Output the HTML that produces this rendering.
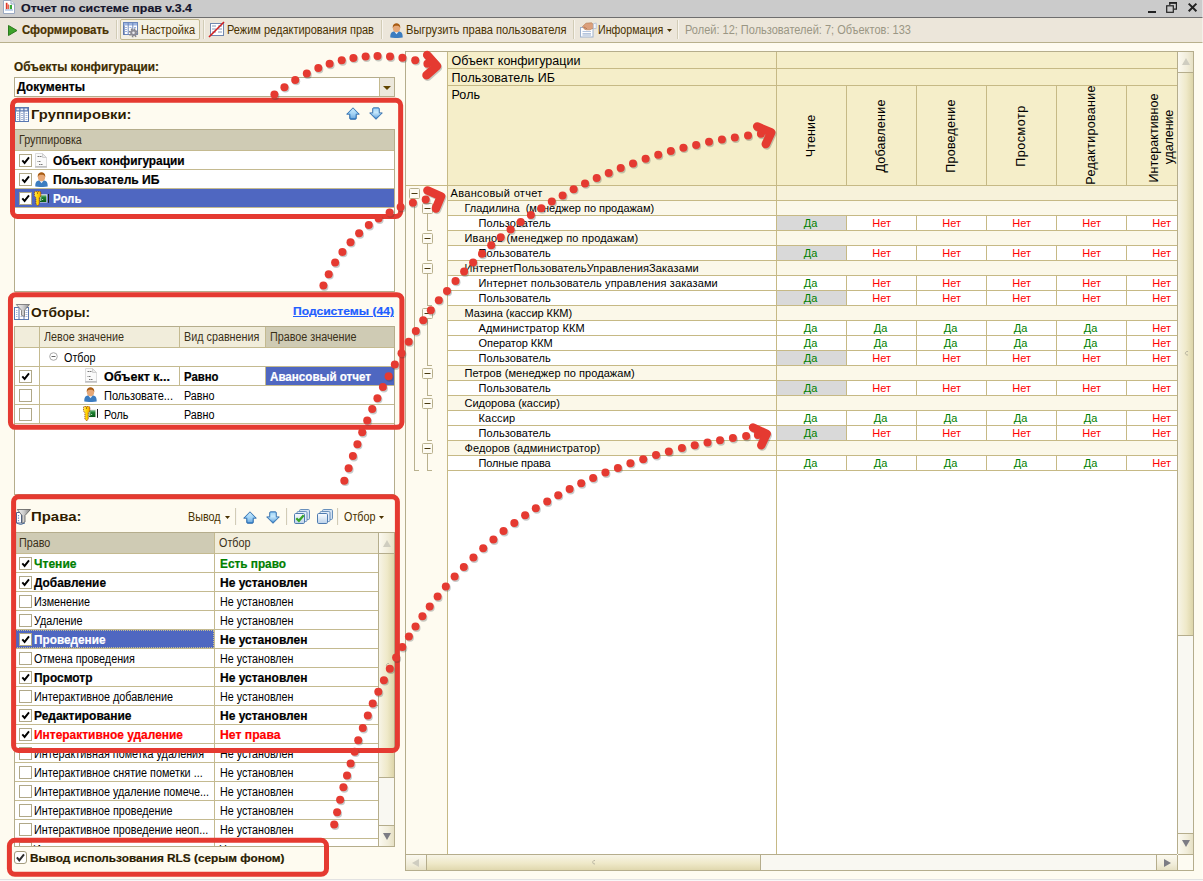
<!DOCTYPE html><html lang="ru"><head><meta charset="utf-8"><title>Отчет по системе прав v.3.4</title><style>
html,body{margin:0;padding:0}
body{width:1203px;height:881px;position:relative;overflow:hidden;background:#fefbf0;font-family:"Liberation Sans",sans-serif;font-size:11px;color:#000}
div,span{box-sizing:border-box}
.abs{position:absolute}
.t{position:absolute;white-space:pre;line-height:1}
#title{position:absolute;left:0;top:0;width:1203px;height:18px;background:#cbcbcb;border-bottom:1px solid #6e6e6e}
#tb{position:absolute;left:0;top:18px;width:1203px;height:25px;background:#ece6da;border-bottom:1px solid #b8b08c}
.tbt{position:absolute;white-space:nowrap;line-height:1;color:#4a3200;font-size:11px}
.sep{position:absolute;width:2px;height:19px;border-left:1px solid #d2ccb6;border-right:1px solid #f8f5ee}
.cb{position:absolute;width:13px;height:13px;border:1px solid #b0a888;background:#fff}
.hl{position:absolute;height:1px;background:#c4ba90}
.vl{position:absolute;width:1px;background:#c4ba90}
</style></head><body>
<div id="title">
<svg class="abs" style="left:3px;top:0" width="12" height="14" viewBox="0 0 12 14"><path d="M0.500 0.500h7.500l3.500 3.500v9.500h-11z" fill="#fff" stroke="#9aa8c0"/><path d="M8 0.500v3.500h3.500" fill="#e8ecf4" stroke="#9aa8c0"/><rect x="2.800" y="2.800" width="1.700" height="6.400" fill="#e03828"/><rect x="4.600" y="4.500" width="1.500" height="4.700" fill="#e86050"/><rect x="6.800" y="5" width="2.200" height="4.200" fill="#38a838"/><path d="M2 10h8" stroke="#8cb0e0"/></svg>
<span class="t" style="left:21px;top:3px;font-size:11.5px;font-weight:bold;-webkit-text-stroke:0.2px;color:#14142c;transform:scaleX(1.0776);transform-origin:0 0">Отчет по системе прав v.3.4</span>
<svg class="abs" style="left:1140px;top:0" width="63" height="17" viewBox="0 0 63 17"><rect x="8" y="11" width="8" height="2" fill="#222"/><path d="M29.800 5v-2.300h6.600v6.500h-2.400" fill="none" stroke="#222" stroke-width="1.200"/><rect x="29.200" y="2.200" width="7.800" height="1.600" fill="#222"/><rect x="26.700" y="5.800" width="6.600" height="6.500" fill="none" stroke="#222" stroke-width="1.200"/><path d="M48.700 3.600l7.700 7.700M56.400 3.600l-7.700 7.700" stroke="#222" stroke-width="2"/></svg>
</div>
<div id="tb">
<svg class="abs" style="left:8px;top:7px" width="10" height="11" viewBox="0 0 10 11"><path d="M0.500 0.500L9 5.500L0.500 10.500z" fill="#3da32a" stroke="#2c7a1e"/></svg>
<span class="tbt" style="left:22px;top:6.15px;font-size:12px;font-weight:bold;-webkit-text-stroke:0.2px;transform:scaleX(0.9517);transform-origin:0 0">Сформировать</span>
<div class="sep" style="left:116px;top:2px"></div>
<div class="abs" style="left:120px;top:1px;width:80px;height:21px;border:1px solid #c2b98f;background:#f4f1e4;border-radius:2px"></div>
<svg class="abs" style="left:123px;top:4px" width="16" height="16" viewBox="0 0 16 16"><rect x="0.500" y="0.500" width="14" height="12" fill="#fff" stroke="#6c88bc"/><rect x="1" y="1" width="13" height="2.500" fill="#9cb4e0"/><path d="M5.200 1v11M9.800 1v11" stroke="#6c88bc"/><path d="M2 5.500h2M2 7.500h2M2 9.500h2M6.500 5.500h2M11 5.500h2" stroke="#9cb4e0"/><rect x="0.500" y="3.500" width="1.500" height="9" fill="#3c5890" opacity=".55"/><circle cx="10.500" cy="10.800" r="3.700" fill="none" stroke="#84848c" stroke-width="2" stroke-dasharray="1.450 1.450"/><circle cx="10.500" cy="10.800" r="3.300" fill="#8c8c94"/><circle cx="10.500" cy="10.800" r="1.300" fill="#ececf0"/></svg>
<span class="tbt" style="left:141px;top:6.15px;font-size:12px;transform:scaleX(0.9167);transform-origin:0 0">Настройка</span>
<div class="sep" style="left:203px;top:2px"></div>
<svg class="abs" style="left:208px;top:3px" width="18" height="17" viewBox="0 0 18 17"><rect x="2.500" y="2.500" width="13" height="12" fill="#fff" stroke="#7088b0"/><path d="M4 5h4M4 8h4M4 11h4M10 5h4M10 8h4M10 11h4" stroke="#8898b8"/><path d="M1 16L16 1" stroke="#d02020" stroke-width="1.600"/></svg>
<span class="tbt" style="left:227px;top:6.15px;font-size:12px;transform:scaleX(0.9167);transform-origin:0 0">Режим редактирования прав</span>
<div class="sep" style="left:381px;top:2px"></div>
<svg class="abs" style="left:389.500px;top:5px" width="13" height="15" viewBox="0 0 13 15"><path d="M0.300 14.500c0-4.800 1.200-6.300 6.200-6.300s6.200 1.500 6.200 6.300c-3 .7-9.400.7-12.400 0z" fill="#3b7cc0"/><path d="M4.300 8.600l2.200 2.600l2.200-2.600z" fill="#e8eef6"/><ellipse cx="6.500" cy="5.200" rx="3.600" ry="4" fill="#e6a878"/><path d="M2.700 5c-.6-6.200 8.200-6.200 7.600 0c-.8-1.700-1.600-2.200-3.800-2.200s-3 .5-3.800 2.200z" fill="#a85c14"/></svg>
<span class="tbt" style="left:406px;top:6.15px;font-size:12px;transform:scaleX(0.9282);transform-origin:0 0">Выгрузить права пользователя</span>
<div class="sep" style="left:573px;top:2px"></div>
<svg class="abs" style="left:580px;top:4px" width="17" height="16" viewBox="0 0 17 16"><rect x="0.500" y="5.500" width="12.500" height="9.500" fill="#fdfdff" stroke="#9cb0cc"/><path d="M2.500 9.500h8.500M2.500 11.500h8.500" stroke="#b4c4dc"/><path d="M2.500 13h8.500" stroke="#9cb0cc"/><path d="M2.500 4.500L6 1.200L11.500 0.800L13.500 2.500V6L10 7.800H6.500L4.500 7.200z" fill="#dca07c" stroke="#b07850" stroke-width=".6"/><path d="M13.300 1.800L16.200 1v5.500L13.300 6.500z" fill="#f4f6fa" stroke="#9cb0cc" stroke-width=".6"/><path d="M4 5l3 1.800" stroke="#a86c48" stroke-width=".7"/></svg>
<span class="tbt" style="left:598px;top:6.15px;font-size:12px;transform:scaleX(0.8888);transform-origin:0 0">Информация</span>
<svg class="abs" style="left:667px;top:11px" width="5" height="3" viewBox="0 0 5 3"><path d="M0 0h5L2.500 3z" fill="#4a3200"/></svg>
<div class="sep" style="left:677px;top:2px"></div>
<span class="tbt" style="left:685px;top:6.15px;font-size:12px;color:#9a9684;transform:scaleX(0.9167);transform-origin:0 0">Ролей: 12; Пользователей: 7; Объектов: 133</span>
</div>
<span class="t" style="left:14px;top:61.15px;font-size:12px;font-weight:bold;-webkit-text-stroke:0.2px;color:#3c2c00;transform:scaleX(0.9836);transform-origin:0 0">Объекты конфигурации:</span>
<div class="abs" style="left:14px;top:77px;width:381px;height:20px;border:1px solid #b5ad8c;background:#fff"></div>
<span class="t" style="left:17px;top:81.15px;font-size:12px;font-weight:bold;-webkit-text-stroke:0.2px;transform:scaleX(1.0078);transform-origin:0 0">Документы</span>
<div class="abs" style="left:379px;top:78px;width:15px;height:18px;background:#ece8dc;border-left:1px solid #c4ba90"></div>
<svg class="abs" style="left:383px;top:86px" width="8" height="4" viewBox="0 0 8 4"><path d="M0 0h8L4.0 4z" fill="#624600"/></svg>
<svg class="abs" style="left:15px;top:107px" width="14" height="15" viewBox="0 0 14 15"><rect x="0.500" y="0.500" width="13" height="14" fill="#fff" stroke="#5a78b0"/><rect x="1" y="1" width="12" height="3.500" fill="#5a78b0"/><rect x="1.500" y="1.500" width="2.800" height="1.800" fill="#e8eef8"/><rect x="5.500" y="1.500" width="2.800" height="1.800" fill="#e8eef8"/><rect x="9.500" y="1.500" width="2.800" height="1.800" fill="#e8eef8"/><path d="M4.800 4v10M9 4v10" stroke="#5a78b0"/><path d="M2 6.500h1.500M2 8.500h1.500M2 10.500h1.500M2 12.500h1.500M6 6.500h2M6 8.500h2M6 10.500h2M6 12.500h2M10.500 6.500h2M10.500 8.500h2M10.500 10.500h2M10.500 12.500h2" stroke="#a8b8d8"/></svg>
<span class="t" style="left:30.5px;top:107.5px;font-size:13.4px;font-weight:bold;color:#2e1c00;transform:scaleX(1.1045);transform-origin:0 0">Группировки:</span>
<svg class="abs" style="left:346.2px;top:107px" width="14" height="13" viewBox="0 0 14 13"><defs><linearGradient id="gu1" x1="0" y1="0" x2="0" y2="1"><stop offset="0" stop-color="#c4eafd"/><stop offset=".55" stop-color="#7cc0f0"/><stop offset="1" stop-color="#2f7fca"/></linearGradient></defs><path d="M7 0.800L13.300 7.200H10.300V11.300Q10.300 12.300 9.300 12.300H4.700Q3.700 12.300 3.700 11.300V7.200H0.700z" fill="url(#gu1)" stroke="#2c68a8" stroke-width=".9" stroke-linejoin="round"/><path d="M7 2.600L10.800 6.400H9.300V11H4.700V6.400H3.200z" fill="#fff" opacity=".28"/></svg>
<svg class="abs" style="left:369.4px;top:107.3px" width="14" height="13" viewBox="0 0 14 13"><defs><linearGradient id="gu2" x1="0" y1="0" x2="0" y2="1"><stop offset="0" stop-color="#7cc0f0"/><stop offset=".4" stop-color="#b4e2fc"/><stop offset="1" stop-color="#2f7fca"/></linearGradient></defs><path d="M7 12.300L13.300 5.900H10.300V1.800Q10.300 0.800 9.300 0.800H4.700Q3.700 0.800 3.700 1.800V5.900H0.700z" fill="url(#gu2)" stroke="#2c68a8" stroke-width=".9" stroke-linejoin="round"/><path d="M7 10.500L10.800 6.700H9.300V2.100H4.700V6.700H3.200z" fill="#fff" opacity=".25"/></svg>
<div class="abs" style="left:14px;top:129px;width:381px;height:163px;border:1px solid #b5ad8c;background:#fff"></div>
<div class="abs" style="left:15px;top:130px;width:379px;height:20px;background:#cfcbb4"></div>
<span class="t" style="left:19px;top:134.15px;font-size:12px;color:#3a3018;transform:scaleX(0.8983);transform-origin:0 0">Группировка</span>
<div class="hl" style="left:15px;top:150px;width:379px"></div>
<div class="hl" style="left:15px;top:169px;width:379px"></div>
<div class="cb" style="left:19px;top:154px"><svg width="11" height="11" viewBox="0 0 11 11" style="display:block"><path d="M2.300 5.300L4.600 7.900L9 2.400" fill="none" stroke="#000" stroke-width="1.900"/></svg></div>
<svg class="abs" style="left:35px;top:153px" width="12" height="15" viewBox="0 0 12 15"><path d="M0.500 0.500h7l4 4v9h-11z" fill="#fafafa" stroke="#dcdcdc"/><path d="M7.500 0.500v4h4z" fill="#ececec" stroke="#d0d0d0"/><path d="M2.500 3.500h2M5 3.500h1.500M2.500 8.500h1M4 8.500h1.500M4 11.500h1M5.500 11.500h2" stroke="#7a7a7a"/><path d="M0 14h12" stroke="#a4a4a4"/></svg>
<span class="t" style="left:53px;top:155.15px;font-size:12px;font-weight:bold;-webkit-text-stroke:0.2px;transform:scaleX(0.9874);transform-origin:0 0">Объект конфигурации</span>
<div class="hl" style="left:15px;top:188px;width:379px"></div>
<div class="cb" style="left:19px;top:173px"><svg width="11" height="11" viewBox="0 0 11 11" style="display:block"><path d="M2.300 5.300L4.600 7.900L9 2.400" fill="none" stroke="#000" stroke-width="1.900"/></svg></div>
<svg class="abs" style="left:35px;top:172px" width="13" height="15" viewBox="0 0 13 15"><path d="M0.300 14.500c0-4.800 1.200-6.300 6.200-6.300s6.200 1.500 6.200 6.300c-3 .7-9.400.7-12.400 0z" fill="#3b7cc0"/><path d="M4.300 8.600l2.200 2.600l2.200-2.600z" fill="#e8eef6"/><ellipse cx="6.500" cy="5.200" rx="3.600" ry="4" fill="#e6a878"/><path d="M2.700 5c-.6-6.200 8.200-6.200 7.600 0c-.8-1.700-1.600-2.200-3.800-2.200s-3 .5-3.800 2.200z" fill="#a85c14"/></svg>
<span class="t" style="left:53px;top:174.15px;font-size:12px;font-weight:bold;-webkit-text-stroke:0.2px;transform:scaleX(1.0078);transform-origin:0 0">Пользователь ИБ</span>
<div class="abs" style="left:15px;top:189px;width:379px;height:18px;background:#4f67c1"></div>
<div class="hl" style="left:15px;top:207px;width:379px"></div>
<div class="cb" style="left:19px;top:192px"><svg width="11" height="11" viewBox="0 0 11 11" style="display:block"><path d="M2.300 5.300L4.600 7.900L9 2.400" fill="none" stroke="#000" stroke-width="1.900"/></svg></div>
<svg class="abs" style="left:34px;top:190.5px" width="16" height="16" viewBox="0 0 16 16"><defs><linearGradient id="gk34190.5" x1="0" y1="0" x2="1" y2="0"><stop offset="0" stop-color="#ffe860"/><stop offset=".5" stop-color="#ffd400"/><stop offset="1" stop-color="#f0a000"/></linearGradient><linearGradient id="gg34190.5" x1="0" y1="0" x2="0" y2="1"><stop offset="0" stop-color="#7cc088"/><stop offset=".35" stop-color="#1c8030"/><stop offset="1" stop-color="#0a5c18"/></linearGradient></defs><rect x="5.800" y="3.300" width="7.400" height="8.200" fill="#f0eeea"/><rect x="5.800" y="4.200" width="6.600" height="6.800" fill="url(#gg34190.5)"/><rect x="6.400" y="5.500" width=".8" height="4.500" fill="#e8f0e8"/><rect x="8.200" y="8" width=".9" height=".9" fill="#f0f8f0"/><path d="M14.500 3v8.800" stroke="#1c1c1c"/><path d="M0.400 1.200L1.300 0.300H5.900L6.900 1.200V5L5.300 6.800V13L3.600 14.900L1.900 13V6.800L0.400 5z" fill="url(#gk34190.5)" stroke="#7a1c10" stroke-width=".7" stroke-dasharray="1.200 .7"/><rect x="3.100" y="1.300" width=".9" height="1.500" fill="#8a4420"/></svg>
<span class="t" style="left:53px;top:193.15px;font-size:12px;font-weight:bold;-webkit-text-stroke:0.2px;color:#fff;transform:scaleX(0.9584);transform-origin:0 0">Роль</span>
<svg class="abs" style="left:14px;top:304px" width="16" height="16" viewBox="0 0 16 16"><defs><linearGradient id="gf1" x1="0" y1="0" x2="1" y2="0"><stop offset="0" stop-color="#f4f4f4"/><stop offset=".5" stop-color="#d0d0d0"/><stop offset="1" stop-color="#8c8c8c"/></linearGradient></defs><rect x="0.500" y="3.500" width="14" height="12" fill="#fff" stroke="#5a78b0"/><path d="M5 4v11M10 4v11" stroke="#5a78b0"/><path d="M2 6.500h1.500M2 8.500h1.500M2 10.500h1.500M2 12.500h1.500M11.500 6.500h2M11.500 8.500h2M11.500 10.500h2M11.500 12.500h2M6.500 12.500h2" stroke="#a8b8d8"/><path d="M2.300 0.500h13.200l-5 5.800v6.200l-3-1.200v-5z" fill="url(#gf1)" stroke="#6c6c6c" stroke-width=".8"/></svg>
<span class="t" style="left:31px;top:305.5px;font-size:13.4px;font-weight:bold;color:#2e1c00;transform:scaleX(1.0254);transform-origin:0 0">Отборы:</span>
<span class="t" style="left:293px;top:306.4px;font-size:11.5px;font-weight:bold;-webkit-text-stroke:0.2px;color:#1f5eff;transform:scaleX(1.0521);transform-origin:0 0;text-decoration:underline">Подсистемы (44)</span>
<div class="abs" style="left:14px;top:326px;width:381px;height:169px;border:1px solid #b5ad8c;background:#fff"></div>
<div class="abs" style="left:15px;top:327px;width:250px;height:20px;background:#f1eddb"></div>
<div class="abs" style="left:265px;top:327px;width:129px;height:20px;background:#cfcbb4"></div>
<div class="vl" style="left:39px;top:327px;height:20px"></div>
<div class="vl" style="left:179px;top:327px;height:20px"></div>
<div class="vl" style="left:265px;top:327px;height:20px"></div>
<div class="hl" style="left:15px;top:347px;width:379px"></div>
<span class="t" style="left:44px;top:331.15px;font-size:12px;color:#3a3018;transform:scaleX(0.8983);transform-origin:0 0">Левое значение</span>
<span class="t" style="left:184px;top:331.15px;font-size:12px;color:#3a3018;transform:scaleX(0.8983);transform-origin:0 0">Вид сравнения</span>
<span class="t" style="left:270px;top:331.15px;font-size:12px;color:#3a3018;transform:scaleX(0.8983);transform-origin:0 0">Правое значение</span>
<div class="vl" style="left:39px;top:348px;height:76px"></div>
<div class="hl" style="left:15px;top:366px;width:379px"></div>
<div class="hl" style="left:15px;top:385px;width:379px"></div>
<div class="hl" style="left:15px;top:404px;width:379px"></div>
<div class="hl" style="left:15px;top:423px;width:379px"></div>
<div class="vl" style="left:179px;top:367px;height:19px"></div>
<div class="vl" style="left:265px;top:367px;height:19px"></div>
<svg class="abs" style="left:49px;top:352px" width="9" height="9" viewBox="0 0 9 9"><circle cx="4.500" cy="4.500" r="3.800" fill="#fff" stroke="#a8a8a8"/><path d="M2.500 4.500h4" stroke="#666"/></svg>
<span class="t" style="left:64px;top:352.15px;font-size:12px;transform:scaleX(0.8983);transform-origin:0 0">Отбор</span>
<div class="cb" style="left:19px;top:370px"><svg width="11" height="11" viewBox="0 0 11 11" style="display:block"><path d="M2.300 5.300L4.600 7.900L9 2.400" fill="none" stroke="#000" stroke-width="1.900"/></svg></div>
<svg class="abs" style="left:85px;top:368px" width="12" height="15" viewBox="0 0 12 15"><path d="M0.500 0.500h7l4 4v9h-11z" fill="#fafafa" stroke="#dcdcdc"/><path d="M7.500 0.500v4h4z" fill="#ececec" stroke="#d0d0d0"/><path d="M2.500 3.500h2M5 3.500h1.500M2.500 8.500h1M4 8.500h1.500M4 11.500h1M5.500 11.500h2" stroke="#7a7a7a"/><path d="M0 14h12" stroke="#a4a4a4"/></svg>
<span class="t" style="left:104px;top:371.15px;font-size:12px;font-weight:bold;-webkit-text-stroke:0.2px;transform:scaleX(1.0438);transform-origin:0 0">Объект к...</span>
<span class="t" style="left:184px;top:371.15px;font-size:12px;font-weight:bold;-webkit-text-stroke:0.2px;transform:scaleX(0.9458);transform-origin:0 0">Равно</span>
<div class="abs" style="left:266px;top:367px;width:128px;height:18px;background:#4f67c1"></div>
<span class="t" style="left:270px;top:371.15px;font-size:12px;font-weight:bold;-webkit-text-stroke:0.2px;color:#fff;transform:scaleX(0.9673);transform-origin:0 0">Авансовый отчет</span>
<div class="cb" style="left:19px;top:389px"></div>
<svg class="abs" style="left:84px;top:387px" width="13" height="15" viewBox="0 0 13 15"><path d="M0.300 14.500c0-4.800 1.200-6.300 6.200-6.300s6.200 1.500 6.200 6.300c-3 .7-9.400.7-12.400 0z" fill="#3b7cc0"/><path d="M4.300 8.600l2.200 2.600l2.200-2.600z" fill="#e8eef6"/><ellipse cx="6.500" cy="5.200" rx="3.600" ry="4" fill="#e6a878"/><path d="M2.700 5c-.6-6.200 8.200-6.200 7.600 0c-.8-1.700-1.600-2.200-3.800-2.200s-3 .5-3.800 2.200z" fill="#a85c14"/></svg>
<span class="t" style="left:104px;top:390.15px;font-size:12px;transform:scaleX(0.9198);transform-origin:0 0">Пользовате...</span>
<span class="t" style="left:184px;top:390.15px;font-size:12px;transform:scaleX(0.8983);transform-origin:0 0">Равно</span>
<div class="cb" style="left:19px;top:408px"></div>
<svg class="abs" style="left:83px;top:405.8px" width="16" height="16" viewBox="0 0 16 16"><defs><linearGradient id="gk83405.8" x1="0" y1="0" x2="1" y2="0"><stop offset="0" stop-color="#ffe860"/><stop offset=".5" stop-color="#ffd400"/><stop offset="1" stop-color="#f0a000"/></linearGradient><linearGradient id="gg83405.8" x1="0" y1="0" x2="0" y2="1"><stop offset="0" stop-color="#7cc088"/><stop offset=".35" stop-color="#1c8030"/><stop offset="1" stop-color="#0a5c18"/></linearGradient></defs><rect x="5.800" y="3.300" width="7.400" height="8.200" fill="#f0eeea"/><rect x="5.800" y="4.200" width="6.600" height="6.800" fill="url(#gg83405.8)"/><rect x="6.400" y="5.500" width=".8" height="4.500" fill="#e8f0e8"/><rect x="8.200" y="8" width=".9" height=".9" fill="#f0f8f0"/><path d="M14.500 3v8.800" stroke="#1c1c1c"/><path d="M0.400 1.200L1.300 0.300H5.900L6.900 1.200V5L5.300 6.800V13L3.600 14.900L1.900 13V6.800L0.400 5z" fill="url(#gk83405.8)" stroke="#7a1c10" stroke-width=".7" stroke-dasharray="1.200 .7"/><rect x="3.100" y="1.300" width=".9" height="1.500" fill="#8a4420"/></svg>
<span class="t" style="left:104px;top:409.15px;font-size:12px;transform:scaleX(0.8983);transform-origin:0 0">Роль</span>
<span class="t" style="left:184px;top:409.15px;font-size:12px;transform:scaleX(0.8983);transform-origin:0 0">Равно</span>
<svg class="abs" style="left:15.5px;top:509px" width="15" height="16" viewBox="0 0 15 16"><defs><linearGradient id="gf2" x1="0" y1="0" x2="1" y2="0"><stop offset="0" stop-color="#f4f4f4"/><stop offset=".5" stop-color="#cccccc"/><stop offset="1" stop-color="#808080"/></linearGradient></defs><path d="M0.500 3.500h5v10.500h-5z" fill="#fff" stroke="#4a6494"/><path d="M2.500 6v1.200M2.500 8.500v1.200M2.500 11v1.200" stroke="#6c94d0" stroke-width="1.200"/><path d="M1.300 0.500h13.200l-5.500 6v6.500l-3 1.500v-8z" fill="url(#gf2)" stroke="#5c5c5c" stroke-width=".8"/><path d="M0.500 14l4 1.500l4.500-1.500" fill="none" stroke="#4a6c9c"/></svg>
<span class="t" style="left:30.5px;top:509.8px;font-size:13.4px;font-weight:bold;color:#2e1c00;transform:scaleX(1.1161);transform-origin:0 0">Права:</span>
<span class="t" style="left:188px;top:511.15px;font-size:12px;color:#4a3200;transform:scaleX(0.8983);transform-origin:0 0">Вывод</span>
<svg class="abs" style="left:225px;top:516px" width="5" height="3" viewBox="0 0 5 3"><path d="M0 0h5L2.5 3z" fill="#4a3200"/></svg>
<div class="sep" style="left:235px;top:508px;height:17px"></div>
<svg class="abs" style="left:242.5px;top:510.5px" width="14" height="13" viewBox="0 0 14 13"><defs><linearGradient id="gu3" x1="0" y1="0" x2="0" y2="1"><stop offset="0" stop-color="#c4eafd"/><stop offset=".55" stop-color="#7cc0f0"/><stop offset="1" stop-color="#2f7fca"/></linearGradient></defs><path d="M7 0.800L13.300 7.200H10.300V11.300Q10.300 12.300 9.300 12.300H4.700Q3.700 12.300 3.700 11.300V7.200H0.700z" fill="url(#gu3)" stroke="#2c68a8" stroke-width=".9" stroke-linejoin="round"/><path d="M7 2.600L10.800 6.400H9.300V11H4.700V6.400H3.200z" fill="#fff" opacity=".28"/></svg>
<svg class="abs" style="left:265.5px;top:510.5px" width="14" height="13" viewBox="0 0 14 13"><defs><linearGradient id="gu4" x1="0" y1="0" x2="0" y2="1"><stop offset="0" stop-color="#7cc0f0"/><stop offset=".4" stop-color="#b4e2fc"/><stop offset="1" stop-color="#2f7fca"/></linearGradient></defs><path d="M7 12.300L13.300 5.900H10.300V1.800Q10.300 0.800 9.300 0.800H4.700Q3.700 0.800 3.700 1.800V5.900H0.700z" fill="url(#gu4)" stroke="#2c68a8" stroke-width=".9" stroke-linejoin="round"/><path d="M7 10.500L10.800 6.700H9.300V2.100H4.700V6.700H3.200z" fill="#fff" opacity=".25"/></svg>
<div class="sep" style="left:286px;top:508px;height:17px"></div>
<svg class="abs" style="left:294px;top:509px" width="16" height="15" viewBox="0 0 16 15"><defs><linearGradient id="gc5" x1="0" y1="0" x2="0" y2="1"><stop offset="0" stop-color="#fbfdff"/><stop offset="1" stop-color="#bcd2ea"/></linearGradient></defs><rect x="5.500" y="0.500" width="10" height="10" rx="1.200" fill="#d4e2f2" stroke="#6890bc"/><rect x="3" y="2.500" width="10" height="10" rx="1.200" fill="#e2ecf8" stroke="#6890bc"/><rect x="0.500" y="4.500" width="10" height="10" rx="1.200" fill="url(#gc5)" stroke="#4f7cb0"/><path d="M2.300 9.200l2.600 2.600l4.800-5.600" fill="none" stroke="#38a428" stroke-width="2.200"/></svg>
<svg class="abs" style="left:317px;top:509px" width="16" height="15" viewBox="0 0 16 15"><defs><linearGradient id="gc6" x1="0" y1="0" x2="0" y2="1"><stop offset="0" stop-color="#fbfdff"/><stop offset="1" stop-color="#bcd2ea"/></linearGradient></defs><rect x="5.500" y="0.500" width="10" height="10" rx="1.200" fill="#d4e2f2" stroke="#6890bc"/><rect x="3" y="2.500" width="10" height="10" rx="1.200" fill="#e2ecf8" stroke="#6890bc"/><rect x="0.500" y="4.500" width="10" height="10" rx="1.200" fill="url(#gc6)" stroke="#4f7cb0"/></svg>
<div class="sep" style="left:337px;top:508px;height:17px"></div>
<span class="t" style="left:343.5px;top:511.15px;font-size:12px;color:#4a3200;transform:scaleX(0.8983);transform-origin:0 0">Отбор</span>
<svg class="abs" style="left:379px;top:516px" width="5" height="3" viewBox="0 0 5 3"><path d="M0 0h5L2.5 3z" fill="#4a3200"/></svg>
<div class="abs" style="left:14px;top:532px;width:381px;height:315px;border:1px solid #b5ad8c;background:#fff;overflow:hidden"></div>
<div class="abs" style="left:15px;top:533px;width:199px;height:20px;background:#cfcbb4"></div>
<div class="abs" style="left:215px;top:533px;width:163px;height:20px;background:#f1eddb"></div>
<div class="vl" style="left:214px;top:533px;height:313px"></div>
<div class="hl" style="left:15px;top:553px;width:363px"></div>
<span class="t" style="left:19px;top:537.15px;font-size:12px;color:#3a3018;transform:scaleX(0.8983);transform-origin:0 0">Право</span>
<span class="t" style="left:219px;top:537.15px;font-size:12px;color:#3a3018;transform:scaleX(0.8983);transform-origin:0 0">Отбор</span>
<div class="hl" style="left:15px;top:572px;width:363px"></div>
<div class="cb" style="left:19px;top:557px"><svg width="11" height="11" viewBox="0 0 11 11" style="display:block"><path d="M2.300 5.300L4.600 7.900L9 2.400" fill="none" stroke="#000" stroke-width="1.900"/></svg></div>
<span class="t" style="left:33.5px;top:558.15px;font-size:12px;font-weight:bold;-webkit-text-stroke:0.2px;color:#008000;transform:scaleX(1.0052);transform-origin:0 0">Чтение</span>
<span class="t" style="left:219.5px;top:558.15px;font-size:12px;font-weight:bold;-webkit-text-stroke:0.2px;color:#008000;transform:scaleX(0.9841);transform-origin:0 0">Есть право</span>
<div class="hl" style="left:15px;top:591px;width:363px"></div>
<div class="cb" style="left:19px;top:576px"><svg width="11" height="11" viewBox="0 0 11 11" style="display:block"><path d="M2.300 5.300L4.600 7.900L9 2.400" fill="none" stroke="#000" stroke-width="1.900"/></svg></div>
<span class="t" style="left:33.5px;top:577.15px;font-size:12px;font-weight:bold;-webkit-text-stroke:0.2px;transform:scaleX(0.9894);transform-origin:0 0">Добавление</span>
<span class="t" style="left:219.5px;top:577.15px;font-size:12px;font-weight:bold;-webkit-text-stroke:0.2px;transform:scaleX(1.0005);transform-origin:0 0">Не установлен</span>
<div class="hl" style="left:15px;top:610px;width:363px"></div>
<div class="cb" style="left:19px;top:595px"></div>
<span class="t" style="left:33.5px;top:596.15px;font-size:12px;transform:scaleX(0.8983);transform-origin:0 0">Изменение</span>
<span class="t" style="left:219.5px;top:596.15px;font-size:12px;transform:scaleX(0.8933);transform-origin:0 0">Не установлен</span>
<div class="hl" style="left:15px;top:629px;width:363px"></div>
<div class="cb" style="left:19px;top:614px"></div>
<span class="t" style="left:33.5px;top:615.15px;font-size:12px;transform:scaleX(0.8983);transform-origin:0 0">Удаление</span>
<span class="t" style="left:219.5px;top:615.15px;font-size:12px;transform:scaleX(0.8933);transform-origin:0 0">Не установлен</span>
<div class="abs" style="left:15px;top:630px;width:199px;height:18px;background:#4f67c1;outline:1px dotted #c8c090;outline-offset:-1px"></div>
<div class="hl" style="left:15px;top:648px;width:363px"></div>
<div class="cb" style="left:19px;top:633px"><svg width="11" height="11" viewBox="0 0 11 11" style="display:block"><path d="M2.300 5.300L4.600 7.900L9 2.400" fill="none" stroke="#000" stroke-width="1.900"/></svg></div>
<span class="t" style="left:33.5px;top:634.15px;font-size:12px;font-weight:bold;-webkit-text-stroke:0.2px;color:#fff;transform:scaleX(0.9826);transform-origin:0 0">Проведение</span>
<span class="t" style="left:219.5px;top:634.15px;font-size:12px;font-weight:bold;-webkit-text-stroke:0.2px;transform:scaleX(1.0005);transform-origin:0 0">Не установлен</span>
<div class="hl" style="left:15px;top:667px;width:363px"></div>
<div class="cb" style="left:19px;top:652px"></div>
<span class="t" style="left:33.5px;top:653.15px;font-size:12px;transform:scaleX(0.8983);transform-origin:0 0">Отмена проведения</span>
<span class="t" style="left:219.5px;top:653.15px;font-size:12px;transform:scaleX(0.8933);transform-origin:0 0">Не установлен</span>
<div class="hl" style="left:15px;top:686px;width:363px"></div>
<div class="cb" style="left:19px;top:671px"><svg width="11" height="11" viewBox="0 0 11 11" style="display:block"><path d="M2.300 5.300L4.600 7.900L9 2.400" fill="none" stroke="#000" stroke-width="1.900"/></svg></div>
<span class="t" style="left:33.5px;top:672.15px;font-size:12px;font-weight:bold;-webkit-text-stroke:0.2px;transform:scaleX(0.9956);transform-origin:0 0">Просмотр</span>
<span class="t" style="left:219.5px;top:672.15px;font-size:12px;font-weight:bold;-webkit-text-stroke:0.2px;transform:scaleX(1.0005);transform-origin:0 0">Не установлен</span>
<div class="hl" style="left:15px;top:705px;width:363px"></div>
<div class="cb" style="left:19px;top:690px"></div>
<span class="t" style="left:33.5px;top:691.15px;font-size:12px;transform:scaleX(0.8983);transform-origin:0 0">Интерактивное добавление</span>
<span class="t" style="left:219.5px;top:691.15px;font-size:12px;transform:scaleX(0.8933);transform-origin:0 0">Не установлен</span>
<div class="hl" style="left:15px;top:724px;width:363px"></div>
<div class="cb" style="left:19px;top:709px"><svg width="11" height="11" viewBox="0 0 11 11" style="display:block"><path d="M2.300 5.300L4.600 7.900L9 2.400" fill="none" stroke="#000" stroke-width="1.900"/></svg></div>
<span class="t" style="left:33.5px;top:710.15px;font-size:12px;font-weight:bold;-webkit-text-stroke:0.2px;transform:scaleX(0.9971);transform-origin:0 0">Редактирование</span>
<span class="t" style="left:219.5px;top:710.15px;font-size:12px;font-weight:bold;-webkit-text-stroke:0.2px;transform:scaleX(1.0005);transform-origin:0 0">Не установлен</span>
<div class="hl" style="left:15px;top:743px;width:363px"></div>
<div class="cb" style="left:19px;top:728px"><svg width="11" height="11" viewBox="0 0 11 11" style="display:block"><path d="M2.300 5.300L4.600 7.900L9 2.400" fill="none" stroke="#000" stroke-width="1.900"/></svg></div>
<span class="t" style="left:33.5px;top:729.15px;font-size:12px;font-weight:bold;-webkit-text-stroke:0.2px;color:#ff0000;transform:scaleX(0.9950);transform-origin:0 0">Интерактивное удаление</span>
<span class="t" style="left:219.5px;top:729.15px;font-size:12px;font-weight:bold;-webkit-text-stroke:0.2px;color:#ff0000;transform:scaleX(1.0162);transform-origin:0 0">Нет права</span>
<div class="hl" style="left:15px;top:762px;width:363px"></div>
<div class="cb" style="left:19px;top:747px"></div>
<span class="t" style="left:33.5px;top:748.15px;font-size:12px;transform:scaleX(0.8983);transform-origin:0 0">Интерактивная пометка удаления</span>
<span class="t" style="left:219.5px;top:748.15px;font-size:12px;transform:scaleX(0.8933);transform-origin:0 0">Не установлен</span>
<div class="hl" style="left:15px;top:781px;width:363px"></div>
<div class="cb" style="left:19px;top:766px"></div>
<span class="t" style="left:33.5px;top:767.15px;font-size:12px;transform:scaleX(0.8983);transform-origin:0 0">Интерактивное снятие пометки ...</span>
<span class="t" style="left:219.5px;top:767.15px;font-size:12px;transform:scaleX(0.8933);transform-origin:0 0">Не установлен</span>
<div class="hl" style="left:15px;top:800px;width:363px"></div>
<div class="cb" style="left:19px;top:785px"></div>
<span class="t" style="left:33.5px;top:786.15px;font-size:12px;transform:scaleX(0.8983);transform-origin:0 0">Интерактивное удаление помече...</span>
<span class="t" style="left:219.5px;top:786.15px;font-size:12px;transform:scaleX(0.8933);transform-origin:0 0">Не установлен</span>
<div class="hl" style="left:15px;top:819px;width:363px"></div>
<div class="cb" style="left:19px;top:804px"></div>
<span class="t" style="left:33.5px;top:805.15px;font-size:12px;transform:scaleX(0.8983);transform-origin:0 0">Интерактивное проведение</span>
<span class="t" style="left:219.5px;top:805.15px;font-size:12px;transform:scaleX(0.8933);transform-origin:0 0">Не установлен</span>
<div class="hl" style="left:15px;top:838px;width:363px"></div>
<div class="cb" style="left:19px;top:823px"></div>
<span class="t" style="left:33.5px;top:824.15px;font-size:12px;transform:scaleX(0.8983);transform-origin:0 0">Интерактивное проведение неоп...</span>
<span class="t" style="left:219.5px;top:824.15px;font-size:12px;transform:scaleX(0.8933);transform-origin:0 0">Не установлен</span>
<div class="abs" style="left:19px;top:842px;width:13px;height:4px;border:1px solid #b0a888;border-bottom:none;background:#fff"></div>
<div class="abs" style="left:33px;top:844px;width:150px;height:2px;overflow:hidden"><span class="t" style="left:0;top:0">Интерактивное удаление</span></div>
<div class="abs" style="left:219px;top:844px;width:150px;height:2px;overflow:hidden"><span class="t" style="left:0;top:0">Не установлен</span></div>
<div class="abs" style="left:378px;top:533px;width:16px;height:313px;background:#f9f8f2;border-left:1px solid #b5ad8c"></div>
<div class="abs" style="left:379px;top:533px;width:15px;height:21px;background:linear-gradient(90deg,#fbf9f0,#f1edda 60%,#e6e0c4);border-bottom:1px solid #b5ad8c"></div>
<svg class="abs" style="left:382.500px;top:540px" width="8" height="7" viewBox="0 0 8 7"><path d="M4 0L8 7H0z" fill="#cfcdc0"/></svg>
<div class="abs" style="left:379px;top:554px;width:15px;height:224px;background:linear-gradient(90deg,#f7f4e6,#efe9c9 55%,#ddd5a9);border-bottom:1px solid #b5ad8c"></div>
<svg class="abs" style="left:384px;top:662px" width="7" height="7" viewBox="0 0 7 7"><path d="M5 1.500C1.500 1 1.500 5.500 5 5" fill="none" stroke="#b8b4a0"/></svg>
<div class="abs" style="left:379px;top:825px;width:15px;height:21px;background:linear-gradient(90deg,#fbf9f0,#f1edda 60%,#e6e0c4);border-top:1px solid #b5ad8c"></div>
<svg class="abs" style="left:382.500px;top:832.500px" width="8" height="7" viewBox="0 0 8 7"><path d="M0 0h8L4 7z" fill="#7c7c84"/></svg>
<div class="abs" style="left:14px;top:851px;width:13px;height:13px;border:1px solid #a39c7e;border-radius:3px;background:#fff"></div>
<svg class="abs" style="left:14px;top:851px" width="13" height="13" viewBox="0 0 13 13"><path d="M2.900 6.300L5.300 9.300L10 3.300" fill="none" stroke="#2c2c2c" stroke-width="2"/></svg>
<span class="t" style="left:30px;top:853px;font-size:11.5px;font-weight:bold;-webkit-text-stroke:0.2px;color:#2a1c00;transform:scaleX(1.0259);transform-origin:0 0">Вывод использования RLS (серым фоном)</span>
<div class="abs" style="left:405px;top:51px;width:789px;height:820px;border:1px solid #b5ad8c;background:#fff"></div>
<div class="abs" style="left:406px;top:52px;width:41px;height:802px;background:#fefbf0"></div>
<div class="vl" style="left:447px;top:52px;height:802px;background:#c6b985"></div>
<div class="vl" style="left:776px;top:52px;height:802px;background:#c6b985"></div>
<div class="abs" style="left:448px;top:52px;width:729px;height:133px;background:#f5eec9"></div>
<div class="hl" style="left:448px;top:68px;width:729px;background:#c6b985"></div>
<div class="hl" style="left:448px;top:85px;width:729px;background:#c6b985"></div>
<div class="hl" style="left:448px;top:185px;width:729px;background:#c6b985"></div>
<div class="hl" style="left:406px;top:185px;width:42px;background:#c6b985"></div>
<div class="vl" style="left:776px;top:52px;height:134px;background:#c6b985"></div>
<div class="vl" style="left:846px;top:86px;height:99px;background:#c6b985"></div>
<div class="vl" style="left:916px;top:86px;height:99px;background:#c6b985"></div>
<div class="vl" style="left:986px;top:86px;height:99px;background:#c6b985"></div>
<div class="vl" style="left:1056px;top:86px;height:99px;background:#c6b985"></div>
<div class="vl" style="left:1126px;top:86px;height:99px;background:#c6b985"></div>
<span class="t" style="left:451.5px;top:54.5px;font-size:12.5px;letter-spacing:0.03px">Объект конфигурации</span>
<span class="t" style="left:451.5px;top:71.5px;font-size:12.5px;letter-spacing:0.12px">Пользователь ИБ</span>
<span class="t" style="left:451.5px;top:88.5px;font-size:12.5px;letter-spacing:0.08px">Роль</span>
<span class="t" style="left:811px;top:135.5px;font-size:12.5px;transform:translate(-50%,-50%) rotate(-90deg);letter-spacing:0.16px">Чтение</span>
<span class="t" style="left:881px;top:135.5px;font-size:12.5px;transform:translate(-50%,-50%) rotate(-90deg);letter-spacing:0.24px">Добавление</span>
<span class="t" style="left:951px;top:135.5px;font-size:12.5px;transform:translate(-50%,-50%) rotate(-90deg);letter-spacing:0.21px">Проведение</span>
<span class="t" style="left:1021px;top:135.5px;font-size:12.5px;transform:translate(-50%,-50%) rotate(-90deg);letter-spacing:0.56px">Просмотр</span>
<span class="t" style="left:1091px;top:135px;font-size:12.5px;transform:translate(-50%,-50%) rotate(-90deg);letter-spacing:0.29px">Редактирование</span>
<span class="t" style="left:1153.5px;top:138px;font-size:12.5px;transform:translate(-50%,-50%) rotate(-90deg);letter-spacing:0.08px">Интерактивное</span>
<span class="t" style="left:1168.5px;top:136.5px;font-size:12.5px;transform:translate(-50%,-50%) rotate(-90deg);letter-spacing:-0.10px">удаление</span>
<div class="abs" style="left:448px;top:186px;width:729px;height:14px;background:#f7f2da"></div>
<div class="hl" style="left:448px;top:200px;width:729px;background:#c6b985"></div>
<span class="t" style="left:450.5px;top:188px;letter-spacing:0.32px">Авансовый отчет</span>
<div class="abs" style="left:448px;top:201px;width:729px;height:14px;background:#fbf8e9"></div>
<div class="hl" style="left:448px;top:215px;width:729px;background:#c6b985"></div>
<span class="t" style="left:464.5px;top:203px;letter-spacing:-0.01px">Гладилина  (менеджер по продажам)</span>
<div class="hl" style="left:448px;top:230px;width:729px;background:#c6b985"></div>
<span class="t" style="left:478.5px;top:218px;letter-spacing:0.07px">Пользователь</span>
<div class="abs" style="left:777px;top:216px;width:69px;height:14px;background:#d9d9d9"></div>
<span class="t" style="left:803.85px;top:218px;color:#008000">Да</span>
<div class="vl" style="left:846px;top:216px;height:14px;background:#c6b985"></div>
<span class="t" style="left:872.25px;top:218px;color:#ff0000">Нет</span>
<div class="vl" style="left:916px;top:216px;height:14px;background:#c6b985"></div>
<span class="t" style="left:942.25px;top:218px;color:#ff0000">Нет</span>
<div class="vl" style="left:986px;top:216px;height:14px;background:#c6b985"></div>
<span class="t" style="left:1012.25px;top:218px;color:#ff0000">Нет</span>
<div class="vl" style="left:1056px;top:216px;height:14px;background:#c6b985"></div>
<span class="t" style="left:1082.25px;top:218px;color:#ff0000">Нет</span>
<div class="vl" style="left:1126px;top:216px;height:14px;background:#c6b985"></div>
<span class="t" style="left:1152.25px;top:218px;color:#ff0000">Нет</span>
<div class="abs" style="left:448px;top:231px;width:729px;height:14px;background:#fbf8e9"></div>
<div class="hl" style="left:448px;top:245px;width:729px;background:#c6b985"></div>
<span class="t" style="left:464.5px;top:233px;letter-spacing:0.15px">Иванов (менеджер по продажам)</span>
<div class="hl" style="left:448px;top:260px;width:729px;background:#c6b985"></div>
<span class="t" style="left:478.5px;top:248px;letter-spacing:0.07px">Пользователь</span>
<div class="abs" style="left:777px;top:246px;width:69px;height:14px;background:#d9d9d9"></div>
<span class="t" style="left:803.85px;top:248px;color:#008000">Да</span>
<div class="vl" style="left:846px;top:246px;height:14px;background:#c6b985"></div>
<span class="t" style="left:872.25px;top:248px;color:#ff0000">Нет</span>
<div class="vl" style="left:916px;top:246px;height:14px;background:#c6b985"></div>
<span class="t" style="left:942.25px;top:248px;color:#ff0000">Нет</span>
<div class="vl" style="left:986px;top:246px;height:14px;background:#c6b985"></div>
<span class="t" style="left:1012.25px;top:248px;color:#ff0000">Нет</span>
<div class="vl" style="left:1056px;top:246px;height:14px;background:#c6b985"></div>
<span class="t" style="left:1082.25px;top:248px;color:#ff0000">Нет</span>
<div class="vl" style="left:1126px;top:246px;height:14px;background:#c6b985"></div>
<span class="t" style="left:1152.25px;top:248px;color:#ff0000">Нет</span>
<div class="abs" style="left:448px;top:261px;width:729px;height:14px;background:#fbf8e9"></div>
<div class="hl" style="left:448px;top:275px;width:729px;background:#c6b985"></div>
<span class="t" style="left:464.5px;top:263px;letter-spacing:0.14px">ИнтернетПользовательУправленияЗаказами</span>
<div class="hl" style="left:448px;top:290px;width:729px;background:#c6b985"></div>
<span class="t" style="left:478.5px;top:278px;letter-spacing:0.14px">Интернет пользователь управления заказами</span>
<span class="t" style="left:803.85px;top:278px;color:#008000">Да</span>
<div class="vl" style="left:846px;top:276px;height:14px;background:#c6b985"></div>
<span class="t" style="left:872.25px;top:278px;color:#ff0000">Нет</span>
<div class="vl" style="left:916px;top:276px;height:14px;background:#c6b985"></div>
<span class="t" style="left:942.25px;top:278px;color:#ff0000">Нет</span>
<div class="vl" style="left:986px;top:276px;height:14px;background:#c6b985"></div>
<span class="t" style="left:1012.25px;top:278px;color:#ff0000">Нет</span>
<div class="vl" style="left:1056px;top:276px;height:14px;background:#c6b985"></div>
<span class="t" style="left:1082.25px;top:278px;color:#ff0000">Нет</span>
<div class="vl" style="left:1126px;top:276px;height:14px;background:#c6b985"></div>
<span class="t" style="left:1152.25px;top:278px;color:#ff0000">Нет</span>
<div class="hl" style="left:448px;top:305px;width:729px;background:#c6b985"></div>
<span class="t" style="left:478.5px;top:293px;letter-spacing:0.07px">Пользователь</span>
<div class="abs" style="left:777px;top:291px;width:69px;height:14px;background:#d9d9d9"></div>
<span class="t" style="left:803.85px;top:293px;color:#008000">Да</span>
<div class="vl" style="left:846px;top:291px;height:14px;background:#c6b985"></div>
<span class="t" style="left:872.25px;top:293px;color:#ff0000">Нет</span>
<div class="vl" style="left:916px;top:291px;height:14px;background:#c6b985"></div>
<span class="t" style="left:942.25px;top:293px;color:#ff0000">Нет</span>
<div class="vl" style="left:986px;top:291px;height:14px;background:#c6b985"></div>
<span class="t" style="left:1012.25px;top:293px;color:#ff0000">Нет</span>
<div class="vl" style="left:1056px;top:291px;height:14px;background:#c6b985"></div>
<span class="t" style="left:1082.25px;top:293px;color:#ff0000">Нет</span>
<div class="vl" style="left:1126px;top:291px;height:14px;background:#c6b985"></div>
<span class="t" style="left:1152.25px;top:293px;color:#ff0000">Нет</span>
<div class="abs" style="left:448px;top:306px;width:729px;height:14px;background:#fbf8e9"></div>
<div class="hl" style="left:448px;top:320px;width:729px;background:#c6b985"></div>
<span class="t" style="left:464.5px;top:308px;letter-spacing:-0.05px">Мазина (кассир ККМ)</span>
<div class="hl" style="left:448px;top:335px;width:729px;background:#c6b985"></div>
<span class="t" style="left:478.5px;top:323px;letter-spacing:0.11px">Администратор ККМ</span>
<span class="t" style="left:803.85px;top:323px;color:#008000">Да</span>
<div class="vl" style="left:846px;top:321px;height:14px;background:#c6b985"></div>
<span class="t" style="left:873.85px;top:323px;color:#008000">Да</span>
<div class="vl" style="left:916px;top:321px;height:14px;background:#c6b985"></div>
<span class="t" style="left:943.85px;top:323px;color:#008000">Да</span>
<div class="vl" style="left:986px;top:321px;height:14px;background:#c6b985"></div>
<span class="t" style="left:1013.85px;top:323px;color:#008000">Да</span>
<div class="vl" style="left:1056px;top:321px;height:14px;background:#c6b985"></div>
<span class="t" style="left:1083.85px;top:323px;color:#008000">Да</span>
<div class="vl" style="left:1126px;top:321px;height:14px;background:#c6b985"></div>
<span class="t" style="left:1152.25px;top:323px;color:#ff0000">Нет</span>
<div class="hl" style="left:448px;top:350px;width:729px;background:#c6b985"></div>
<span class="t" style="left:478.5px;top:338px;letter-spacing:-0.06px">Оператор ККМ</span>
<span class="t" style="left:803.85px;top:338px;color:#008000">Да</span>
<div class="vl" style="left:846px;top:336px;height:14px;background:#c6b985"></div>
<span class="t" style="left:873.85px;top:338px;color:#008000">Да</span>
<div class="vl" style="left:916px;top:336px;height:14px;background:#c6b985"></div>
<span class="t" style="left:943.85px;top:338px;color:#008000">Да</span>
<div class="vl" style="left:986px;top:336px;height:14px;background:#c6b985"></div>
<span class="t" style="left:1013.85px;top:338px;color:#008000">Да</span>
<div class="vl" style="left:1056px;top:336px;height:14px;background:#c6b985"></div>
<span class="t" style="left:1083.85px;top:338px;color:#008000">Да</span>
<div class="vl" style="left:1126px;top:336px;height:14px;background:#c6b985"></div>
<span class="t" style="left:1152.25px;top:338px;color:#ff0000">Нет</span>
<div class="hl" style="left:448px;top:365px;width:729px;background:#c6b985"></div>
<span class="t" style="left:478.5px;top:353px;letter-spacing:0.07px">Пользователь</span>
<div class="abs" style="left:777px;top:351px;width:69px;height:14px;background:#d9d9d9"></div>
<span class="t" style="left:803.85px;top:353px;color:#008000">Да</span>
<div class="vl" style="left:846px;top:351px;height:14px;background:#c6b985"></div>
<span class="t" style="left:872.25px;top:353px;color:#ff0000">Нет</span>
<div class="vl" style="left:916px;top:351px;height:14px;background:#c6b985"></div>
<span class="t" style="left:942.25px;top:353px;color:#ff0000">Нет</span>
<div class="vl" style="left:986px;top:351px;height:14px;background:#c6b985"></div>
<span class="t" style="left:1012.25px;top:353px;color:#ff0000">Нет</span>
<div class="vl" style="left:1056px;top:351px;height:14px;background:#c6b985"></div>
<span class="t" style="left:1082.25px;top:353px;color:#ff0000">Нет</span>
<div class="vl" style="left:1126px;top:351px;height:14px;background:#c6b985"></div>
<span class="t" style="left:1152.25px;top:353px;color:#ff0000">Нет</span>
<div class="abs" style="left:448px;top:366px;width:729px;height:14px;background:#fbf8e9"></div>
<div class="hl" style="left:448px;top:380px;width:729px;background:#c6b985"></div>
<span class="t" style="left:464.5px;top:368px;letter-spacing:0.06px">Петров (менеджер по продажам)</span>
<div class="hl" style="left:448px;top:395px;width:729px;background:#c6b985"></div>
<span class="t" style="left:478.5px;top:383px;letter-spacing:0.07px">Пользователь</span>
<div class="abs" style="left:777px;top:381px;width:69px;height:14px;background:#d9d9d9"></div>
<span class="t" style="left:803.85px;top:383px;color:#008000">Да</span>
<div class="vl" style="left:846px;top:381px;height:14px;background:#c6b985"></div>
<span class="t" style="left:872.25px;top:383px;color:#ff0000">Нет</span>
<div class="vl" style="left:916px;top:381px;height:14px;background:#c6b985"></div>
<span class="t" style="left:942.25px;top:383px;color:#ff0000">Нет</span>
<div class="vl" style="left:986px;top:381px;height:14px;background:#c6b985"></div>
<span class="t" style="left:1012.25px;top:383px;color:#ff0000">Нет</span>
<div class="vl" style="left:1056px;top:381px;height:14px;background:#c6b985"></div>
<span class="t" style="left:1082.25px;top:383px;color:#ff0000">Нет</span>
<div class="vl" style="left:1126px;top:381px;height:14px;background:#c6b985"></div>
<span class="t" style="left:1152.25px;top:383px;color:#ff0000">Нет</span>
<div class="abs" style="left:448px;top:396px;width:729px;height:14px;background:#fbf8e9"></div>
<div class="hl" style="left:448px;top:410px;width:729px;background:#c6b985"></div>
<span class="t" style="left:464.5px;top:398px;letter-spacing:-0.01px">Сидорова (кассир)</span>
<div class="hl" style="left:448px;top:425px;width:729px;background:#c6b985"></div>
<span class="t" style="left:478.5px;top:413px;letter-spacing:0.18px">Кассир</span>
<span class="t" style="left:803.85px;top:413px;color:#008000">Да</span>
<div class="vl" style="left:846px;top:411px;height:14px;background:#c6b985"></div>
<span class="t" style="left:873.85px;top:413px;color:#008000">Да</span>
<div class="vl" style="left:916px;top:411px;height:14px;background:#c6b985"></div>
<span class="t" style="left:943.85px;top:413px;color:#008000">Да</span>
<div class="vl" style="left:986px;top:411px;height:14px;background:#c6b985"></div>
<span class="t" style="left:1013.85px;top:413px;color:#008000">Да</span>
<div class="vl" style="left:1056px;top:411px;height:14px;background:#c6b985"></div>
<span class="t" style="left:1083.85px;top:413px;color:#008000">Да</span>
<div class="vl" style="left:1126px;top:411px;height:14px;background:#c6b985"></div>
<span class="t" style="left:1152.25px;top:413px;color:#ff0000">Нет</span>
<div class="hl" style="left:448px;top:440px;width:729px;background:#c6b985"></div>
<span class="t" style="left:478.5px;top:428px;letter-spacing:0.07px">Пользователь</span>
<div class="abs" style="left:777px;top:426px;width:69px;height:14px;background:#d9d9d9"></div>
<span class="t" style="left:803.85px;top:428px;color:#008000">Да</span>
<div class="vl" style="left:846px;top:426px;height:14px;background:#c6b985"></div>
<span class="t" style="left:872.25px;top:428px;color:#ff0000">Нет</span>
<div class="vl" style="left:916px;top:426px;height:14px;background:#c6b985"></div>
<span class="t" style="left:942.25px;top:428px;color:#ff0000">Нет</span>
<div class="vl" style="left:986px;top:426px;height:14px;background:#c6b985"></div>
<span class="t" style="left:1012.25px;top:428px;color:#ff0000">Нет</span>
<div class="vl" style="left:1056px;top:426px;height:14px;background:#c6b985"></div>
<span class="t" style="left:1082.25px;top:428px;color:#ff0000">Нет</span>
<div class="vl" style="left:1126px;top:426px;height:14px;background:#c6b985"></div>
<span class="t" style="left:1152.25px;top:428px;color:#ff0000">Нет</span>
<div class="abs" style="left:448px;top:441px;width:729px;height:14px;background:#fbf8e9"></div>
<div class="hl" style="left:448px;top:455px;width:729px;background:#c6b985"></div>
<span class="t" style="left:464.5px;top:443px;letter-spacing:0.10px">Федоров (администратор)</span>
<div class="hl" style="left:448px;top:470px;width:729px;background:#c6b985"></div>
<span class="t" style="left:478.5px;top:458px;letter-spacing:-0.11px">Полные права</span>
<span class="t" style="left:803.85px;top:458px;color:#008000">Да</span>
<div class="vl" style="left:846px;top:456px;height:14px;background:#c6b985"></div>
<span class="t" style="left:873.85px;top:458px;color:#008000">Да</span>
<div class="vl" style="left:916px;top:456px;height:14px;background:#c6b985"></div>
<span class="t" style="left:943.85px;top:458px;color:#008000">Да</span>
<div class="vl" style="left:986px;top:456px;height:14px;background:#c6b985"></div>
<span class="t" style="left:1013.85px;top:458px;color:#008000">Да</span>
<div class="vl" style="left:1056px;top:456px;height:14px;background:#c6b985"></div>
<span class="t" style="left:1083.85px;top:458px;color:#008000">Да</span>
<div class="vl" style="left:1126px;top:456px;height:14px;background:#c6b985"></div>
<span class="t" style="left:1152.25px;top:458px;color:#ff0000">Нет</span>
<div class="vl" style="left:776px;top:186px;height:285px;background:#c6b985"></div>
<svg class="abs" style="left:409px;top:188px" width="11" height="11" viewBox="0 0 11 11"><rect x="0.500" y="0.500" width="10" height="10" rx="1" fill="#fdfbf2" stroke="#b9b18e"/><path d="M2.500 5.500h6" stroke="#4a3a10"/></svg>
<div class="vl" style="left:414px;top:199px;height:271px;background:#b9b18e"></div>
<div class="hl" style="left:414px;top:470px;width:5px;background:#b9b18e"></div>
<svg class="abs" style="left:422px;top:203px" width="11" height="11" viewBox="0 0 11 11"><rect x="0.500" y="0.500" width="10" height="10" rx="1" fill="#fdfbf2" stroke="#b9b18e"/><path d="M2.500 5.500h6" stroke="#4a3a10"/></svg>
<div class="vl" style="left:427px;top:214px;height:16px;background:#b9b18e"></div>
<div class="hl" style="left:427px;top:230px;width:5px;background:#b9b18e"></div>
<svg class="abs" style="left:422px;top:233px" width="11" height="11" viewBox="0 0 11 11"><rect x="0.500" y="0.500" width="10" height="10" rx="1" fill="#fdfbf2" stroke="#b9b18e"/><path d="M2.500 5.500h6" stroke="#4a3a10"/></svg>
<div class="vl" style="left:427px;top:244px;height:16px;background:#b9b18e"></div>
<div class="hl" style="left:427px;top:260px;width:5px;background:#b9b18e"></div>
<svg class="abs" style="left:422px;top:263px" width="11" height="11" viewBox="0 0 11 11"><rect x="0.500" y="0.500" width="10" height="10" rx="1" fill="#fdfbf2" stroke="#b9b18e"/><path d="M2.500 5.500h6" stroke="#4a3a10"/></svg>
<div class="vl" style="left:427px;top:274px;height:31px;background:#b9b18e"></div>
<div class="hl" style="left:427px;top:305px;width:5px;background:#b9b18e"></div>
<svg class="abs" style="left:422px;top:308px" width="11" height="11" viewBox="0 0 11 11"><rect x="0.500" y="0.500" width="10" height="10" rx="1" fill="#fdfbf2" stroke="#b9b18e"/><path d="M2.500 5.500h6" stroke="#4a3a10"/></svg>
<div class="vl" style="left:427px;top:319px;height:46px;background:#b9b18e"></div>
<div class="hl" style="left:427px;top:365px;width:5px;background:#b9b18e"></div>
<svg class="abs" style="left:422px;top:368px" width="11" height="11" viewBox="0 0 11 11"><rect x="0.500" y="0.500" width="10" height="10" rx="1" fill="#fdfbf2" stroke="#b9b18e"/><path d="M2.500 5.500h6" stroke="#4a3a10"/></svg>
<div class="vl" style="left:427px;top:379px;height:16px;background:#b9b18e"></div>
<div class="hl" style="left:427px;top:395px;width:5px;background:#b9b18e"></div>
<svg class="abs" style="left:422px;top:398px" width="11" height="11" viewBox="0 0 11 11"><rect x="0.500" y="0.500" width="10" height="10" rx="1" fill="#fdfbf2" stroke="#b9b18e"/><path d="M2.500 5.500h6" stroke="#4a3a10"/></svg>
<div class="vl" style="left:427px;top:409px;height:31px;background:#b9b18e"></div>
<div class="hl" style="left:427px;top:440px;width:5px;background:#b9b18e"></div>
<svg class="abs" style="left:422px;top:443px" width="11" height="11" viewBox="0 0 11 11"><rect x="0.500" y="0.500" width="10" height="10" rx="1" fill="#fdfbf2" stroke="#b9b18e"/><path d="M2.500 5.500h6" stroke="#4a3a10"/></svg>
<div class="vl" style="left:427px;top:454px;height:16px;background:#b9b18e"></div>
<div class="hl" style="left:427px;top:470px;width:5px;background:#b9b18e"></div>
<div class="abs" style="left:1177px;top:52px;width:16px;height:802px;background:#f9f8f2;border-left:1px solid #b5ad8c"></div>
<div class="abs" style="left:1178px;top:52px;width:15px;height:21px;background:linear-gradient(90deg,#fbf9f0,#f1edda 60%,#e6e0c4);border-bottom:1px solid #b5ad8c"></div>
<svg class="abs" style="left:1181.500px;top:58px" width="8" height="7" viewBox="0 0 8 7"><path d="M4 0L8 7H0z" fill="#cfcdc0"/></svg>
<div class="abs" style="left:1178px;top:73px;width:15px;height:563px;background:linear-gradient(90deg,#f7f4e6,#efe9c9 55%,#ddd5a9);border-bottom:1px solid #b5ad8c"></div>
<div class="abs" style="left:1178px;top:833px;width:15px;height:21px;background:linear-gradient(90deg,#fbf9f0,#f1edda 60%,#e6e0c4);border-top:1px solid #b5ad8c"></div>
<svg class="abs" style="left:1181.500px;top:840px" width="8" height="7" viewBox="0 0 8 7"><path d="M0 0h8L4 7z" fill="#7c7c84"/></svg>
<div class="abs" style="left:406px;top:854px;width:771px;height:16px;background:#f9f8f2;border-top:1px solid #b5ad8c"></div>
<div class="abs" style="left:406px;top:855px;width:21px;height:15px;background:linear-gradient(180deg,#fbf9f0,#f1edda 60%,#e6e0c4);border-right:1px solid #b5ad8c"></div>
<svg class="abs" style="left:412px;top:858.500px" width="7" height="8" viewBox="0 0 7 8"><path d="M0 4L7 0v8z" fill="#cfcdc0"/></svg>
<div class="abs" style="left:427px;top:855px;width:334px;height:15px;background:linear-gradient(180deg,#f7f4e6,#efe9c9 55%,#e0d8ae);border-right:1px solid #b5ad8c"></div>
<svg class="abs" style="left:591px;top:859px" width="5" height="7" viewBox="0 0 5 7"><path d="M4 1.500C1 1 1 5.500 4 5" fill="none" stroke="#b8b4a0"/></svg>
<svg class="abs" style="left:1183px;top:350px" width="7" height="7" viewBox="0 0 7 7"><path d="M5 1.500C1.500 1 1.500 5.500 5 5" fill="none" stroke="#b8b4a0"/></svg>
<div class="abs" style="left:1156px;top:855px;width:22px;height:15px;background:linear-gradient(180deg,#fbf9f0,#f1edda 60%,#e6e0c4);border-left:1px solid #b5ad8c;border-right:1px solid #b5ad8c"></div>
<svg class="abs" style="left:1164px;top:858.500px" width="7" height="8" viewBox="0 0 7 8"><path d="M7 4L0 0v8z" fill="#7c7c84"/></svg>
<div class="abs" style="left:1178px;top:854px;width:15px;height:16px;background:#fdfbf2;border-top:1px solid #b5ad8c"></div>
<div class="abs" style="left:1202px;top:0px;width:1px;height:881px;background:rgba(255,255,255,.45)"></div>
<div class="abs" style="left:0px;top:879px;width:1203px;height:1px;background:#e2e2e2"></div>
<div class="abs" style="left:0px;top:880px;width:1203px;height:1px;background:#f8f8f8"></div>
<svg class="abs" style="left:0;top:0;pointer-events:none" width="1203" height="881" viewBox="0 0 1203 881">
<g fill="none" stroke="#e53a31" stroke-width="5">
<rect x="12.5" y="100.3" width="388.15" height="116.25" rx="5"/>
<rect x="10.45" y="294.65" width="391.45" height="132.70" rx="5"/>
<rect x="13.6" y="496.8" width="383.80" height="253.70" rx="5"/>
<rect x="9.4" y="840.3" width="317.10" height="34.00" rx="5.5"/>
</g>
<g fill="#2a3a3a" opacity="0.26"><circle cx="275.4" cy="95.9" r="4"/><circle cx="285.4" cy="88.6" r="4"/><circle cx="296.2" cy="81.3" r="4"/><circle cx="307.8" cy="74.9" r="4"/><circle cx="319.3" cy="69.4" r="4"/><circle cx="330.6" cy="65.2" r="4"/><circle cx="342.7" cy="61.7" r="4"/><circle cx="354.4" cy="59.3" r="4"/><circle cx="366.6" cy="57.9" r="4"/><circle cx="378.5" cy="57.5" r="4"/><circle cx="391.0" cy="57.9" r="4"/><circle cx="403.4" cy="59.1" r="4"/><circle cx="416.2" cy="61.6" r="4"/><circle cx="428.4" cy="65.2" r="4"/></g>
<g fill="#2a3a3a" opacity="0.26"><circle cx="324.4" cy="287.0" r="4"/><circle cx="329.7" cy="275.6" r="4"/><circle cx="336.1" cy="263.9" r="4"/><circle cx="343.4" cy="253.3" r="4"/><circle cx="351.5" cy="243.6" r="4"/><circle cx="360.1" cy="234.7" r="4"/><circle cx="369.8" cy="226.4" r="4"/><circle cx="379.6" cy="219.9" r="4"/><circle cx="390.6" cy="213.8" r="4"/><circle cx="401.6" cy="208.5" r="4"/><circle cx="413.9" cy="204.2" r="4"/><circle cx="426.7" cy="200.9" r="4"/></g>
<g fill="#2a3a3a" opacity="0.26"><circle cx="345.3" cy="482.1" r="4"/><circle cx="349.6" cy="469.7" r="4"/><circle cx="353.9" cy="457.5" r="4"/><circle cx="358.4" cy="445.6" r="4"/><circle cx="363.2" cy="433.7" r="4"/><circle cx="368.2" cy="421.8" r="4"/><circle cx="373.2" cy="410.4" r="4"/><circle cx="378.4" cy="399.6" r="4"/><circle cx="383.9" cy="388.4" r="4"/><circle cx="389.6" cy="377.7" r="4"/><circle cx="395.8" cy="366.0" r="4"/><circle cx="402.5" cy="354.6" r="4"/><circle cx="409.7" cy="343.1" r="4"/><circle cx="416.8" cy="332.4" r="4"/><circle cx="424.2" cy="321.7" r="4"/><circle cx="431.8" cy="311.7" r="4"/><circle cx="439.8" cy="301.6" r="4"/><circle cx="448.0" cy="292.3" r="4"/><circle cx="456.5" cy="282.3" r="4"/><circle cx="465.1" cy="273.0" r="4"/><circle cx="474.1" cy="263.8" r="4"/><circle cx="483.0" cy="255.2" r="4"/><circle cx="492.2" cy="246.6" r="4"/><circle cx="501.7" cy="238.6" r="4"/><circle cx="511.6" cy="230.9" r="4"/><circle cx="521.7" cy="223.5" r="4"/><circle cx="531.9" cy="216.4" r="4"/><circle cx="542.3" cy="209.7" r="4"/><circle cx="552.8" cy="202.9" r="4"/><circle cx="563.6" cy="196.8" r="4"/><circle cx="574.6" cy="190.6" r="4"/><circle cx="586.0" cy="184.8" r="4"/><circle cx="597.7" cy="179.5" r="4"/><circle cx="609.7" cy="174.3" r="4"/><circle cx="621.7" cy="169.4" r="4"/><circle cx="634.0" cy="164.8" r="4"/><circle cx="646.6" cy="160.2" r="4"/><circle cx="659.2" cy="156.2" r="4"/><circle cx="671.8" cy="152.5" r="4"/><circle cx="684.4" cy="149.1" r="4"/><circle cx="697.1" cy="146.3" r="4"/><circle cx="710.0" cy="143.2" r="4"/><circle cx="722.9" cy="140.8" r="4"/><circle cx="735.8" cy="138.9" r="4"/><circle cx="749.0" cy="136.9" r="4"/><circle cx="761.9" cy="135.2" r="4"/></g>
<g fill="#2a3a3a" opacity="0.26"><circle cx="335.2" cy="825.9" r="4"/><circle cx="338.1" cy="813.7" r="4"/><circle cx="341.1" cy="801.2" r="4"/><circle cx="344.4" cy="788.7" r="4"/><circle cx="348.0" cy="776.8" r="4"/><circle cx="351.6" cy="765.0" r="4"/><circle cx="355.6" cy="753.1" r="4"/><circle cx="359.2" cy="741.6" r="4"/><circle cx="363.8" cy="729.4" r="4"/><circle cx="368.8" cy="716.9" r="4"/><circle cx="373.7" cy="705.0" r="4"/><circle cx="379.3" cy="693.2" r="4"/><circle cx="384.9" cy="681.6" r="4"/><circle cx="390.8" cy="670.1" r="4"/><circle cx="397.1" cy="658.9" r="4"/><circle cx="403.3" cy="648.4" r="4"/><circle cx="409.9" cy="637.8" r="4"/><circle cx="416.5" cy="627.9" r="4"/><circle cx="423.4" cy="617.7" r="4"/><circle cx="430.7" cy="607.8" r="4"/><circle cx="438.6" cy="598.0" r="4"/><circle cx="446.8" cy="587.8" r="4"/><circle cx="455.6" cy="578.0" r="4"/><circle cx="464.8" cy="568.3" r="4"/><circle cx="474.4" cy="558.9" r="4"/><circle cx="484.2" cy="549.6" r="4"/><circle cx="494.4" cy="540.9" r="4"/><circle cx="504.5" cy="532.4" r="4"/><circle cx="515.3" cy="524.3" r="4"/><circle cx="526.1" cy="516.7" r="4"/><circle cx="536.8" cy="509.7" r="4"/><circle cx="548.2" cy="503.0" r="4"/><circle cx="559.2" cy="496.6" r="4"/><circle cx="570.6" cy="490.5" r="4"/><circle cx="582.2" cy="484.7" r="4"/><circle cx="594.1" cy="479.5" r="4"/><circle cx="606.4" cy="474.0" r="4"/><circle cx="618.9" cy="469.3" r="4"/><circle cx="631.4" cy="464.6" r="4"/><circle cx="644.2" cy="460.6" r="4"/><circle cx="657.0" cy="456.5" r="4"/><circle cx="669.8" cy="453.0" r="4"/><circle cx="682.9" cy="449.5" r="4"/><circle cx="695.7" cy="446.6" r="4"/><circle cx="708.5" cy="444.0" r="4"/><circle cx="721.0" cy="441.7" r="4"/><circle cx="733.9" cy="439.5" r="4"/><circle cx="747.1" cy="437.5" r="4"/><circle cx="758.9" cy="436.4" r="4"/></g>
<path d="M427.2 55L437 66L426.5 75.3" fill="none" stroke="#2a3a3a" opacity="0.26" stroke-width="8.500" stroke-linecap="round" stroke-linejoin="round" transform="translate(1.0,1.4)"/>
<path d="M427.4 190.4L441 196.3L435.9 208.5" fill="none" stroke="#2a3a3a" opacity="0.26" stroke-width="8.500" stroke-linecap="round" stroke-linejoin="round" transform="translate(1.0,1.4)"/>
<path d="M757.2 126.5L771.2 132.4L765.8 144.1" fill="none" stroke="#2a3a3a" opacity="0.26" stroke-width="8.500" stroke-linecap="round" stroke-linejoin="round" transform="translate(1.0,1.4)"/>
<path d="M753.1 427.6L766.7 433.8L761.3 445.2" fill="none" stroke="#2a3a3a" opacity="0.26" stroke-width="8.500" stroke-linecap="round" stroke-linejoin="round" transform="translate(1.0,1.4)"/>
<g fill="#e53a31" opacity="1"><circle cx="274.4" cy="94.5" r="4"/><circle cx="284.4" cy="87.2" r="4"/><circle cx="295.2" cy="79.9" r="4"/><circle cx="306.8" cy="73.5" r="4"/><circle cx="318.3" cy="68.0" r="4"/><circle cx="329.6" cy="63.8" r="4"/><circle cx="341.7" cy="60.3" r="4"/><circle cx="353.4" cy="57.9" r="4"/><circle cx="365.6" cy="56.5" r="4"/><circle cx="377.5" cy="56.1" r="4"/><circle cx="390.0" cy="56.5" r="4"/><circle cx="402.4" cy="57.7" r="4"/><circle cx="415.2" cy="60.2" r="4"/><circle cx="427.4" cy="63.8" r="4"/></g>
<g fill="#e53a31" opacity="1"><circle cx="323.4" cy="285.6" r="4"/><circle cx="328.7" cy="274.2" r="4"/><circle cx="335.1" cy="262.5" r="4"/><circle cx="342.4" cy="251.9" r="4"/><circle cx="350.5" cy="242.2" r="4"/><circle cx="359.1" cy="233.3" r="4"/><circle cx="368.8" cy="225.0" r="4"/><circle cx="378.6" cy="218.5" r="4"/><circle cx="389.6" cy="212.4" r="4"/><circle cx="400.6" cy="207.1" r="4"/><circle cx="412.9" cy="202.8" r="4"/><circle cx="425.7" cy="199.5" r="4"/></g>
<g fill="#e53a31" opacity="1"><circle cx="344.3" cy="480.7" r="4"/><circle cx="348.6" cy="468.3" r="4"/><circle cx="352.9" cy="456.1" r="4"/><circle cx="357.4" cy="444.2" r="4"/><circle cx="362.2" cy="432.3" r="4"/><circle cx="367.2" cy="420.4" r="4"/><circle cx="372.2" cy="409.0" r="4"/><circle cx="377.4" cy="398.2" r="4"/><circle cx="382.9" cy="387.0" r="4"/><circle cx="388.6" cy="376.3" r="4"/><circle cx="394.8" cy="364.6" r="4"/><circle cx="401.5" cy="353.2" r="4"/><circle cx="408.7" cy="341.7" r="4"/><circle cx="415.8" cy="331.0" r="4"/><circle cx="423.2" cy="320.3" r="4"/><circle cx="430.8" cy="310.3" r="4"/><circle cx="438.8" cy="300.2" r="4"/><circle cx="447.0" cy="290.9" r="4"/><circle cx="455.5" cy="280.9" r="4"/><circle cx="464.1" cy="271.6" r="4"/><circle cx="473.1" cy="262.4" r="4"/><circle cx="482.0" cy="253.8" r="4"/><circle cx="491.2" cy="245.2" r="4"/><circle cx="500.7" cy="237.2" r="4"/><circle cx="510.6" cy="229.5" r="4"/><circle cx="520.7" cy="222.1" r="4"/><circle cx="530.9" cy="215.0" r="4"/><circle cx="541.3" cy="208.3" r="4"/><circle cx="551.8" cy="201.5" r="4"/><circle cx="562.6" cy="195.4" r="4"/><circle cx="573.6" cy="189.2" r="4"/><circle cx="585.0" cy="183.4" r="4"/><circle cx="596.7" cy="178.1" r="4"/><circle cx="608.7" cy="172.9" r="4"/><circle cx="620.7" cy="168.0" r="4"/><circle cx="633.0" cy="163.4" r="4"/><circle cx="645.6" cy="158.8" r="4"/><circle cx="658.2" cy="154.8" r="4"/><circle cx="670.8" cy="151.1" r="4"/><circle cx="683.4" cy="147.7" r="4"/><circle cx="696.1" cy="144.9" r="4"/><circle cx="709.0" cy="141.8" r="4"/><circle cx="721.9" cy="139.4" r="4"/><circle cx="734.8" cy="137.5" r="4"/><circle cx="748.0" cy="135.5" r="4"/><circle cx="760.9" cy="133.8" r="4"/></g>
<g fill="#e53a31" opacity="1"><circle cx="334.2" cy="824.5" r="4"/><circle cx="337.1" cy="812.3" r="4"/><circle cx="340.1" cy="799.8" r="4"/><circle cx="343.4" cy="787.3" r="4"/><circle cx="347.0" cy="775.4" r="4"/><circle cx="350.6" cy="763.6" r="4"/><circle cx="354.6" cy="751.7" r="4"/><circle cx="358.2" cy="740.2" r="4"/><circle cx="362.8" cy="728.0" r="4"/><circle cx="367.8" cy="715.5" r="4"/><circle cx="372.7" cy="703.6" r="4"/><circle cx="378.3" cy="691.8" r="4"/><circle cx="383.9" cy="680.2" r="4"/><circle cx="389.8" cy="668.7" r="4"/><circle cx="396.1" cy="657.5" r="4"/><circle cx="402.3" cy="647.0" r="4"/><circle cx="408.9" cy="636.4" r="4"/><circle cx="415.5" cy="626.5" r="4"/><circle cx="422.4" cy="616.3" r="4"/><circle cx="429.7" cy="606.4" r="4"/><circle cx="437.6" cy="596.6" r="4"/><circle cx="445.8" cy="586.4" r="4"/><circle cx="454.6" cy="576.6" r="4"/><circle cx="463.8" cy="566.9" r="4"/><circle cx="473.4" cy="557.5" r="4"/><circle cx="483.2" cy="548.2" r="4"/><circle cx="493.4" cy="539.5" r="4"/><circle cx="503.5" cy="531.0" r="4"/><circle cx="514.3" cy="522.9" r="4"/><circle cx="525.1" cy="515.3" r="4"/><circle cx="535.8" cy="508.3" r="4"/><circle cx="547.2" cy="501.6" r="4"/><circle cx="558.2" cy="495.2" r="4"/><circle cx="569.6" cy="489.1" r="4"/><circle cx="581.2" cy="483.3" r="4"/><circle cx="593.1" cy="478.1" r="4"/><circle cx="605.4" cy="472.6" r="4"/><circle cx="617.9" cy="467.9" r="4"/><circle cx="630.4" cy="463.2" r="4"/><circle cx="643.2" cy="459.2" r="4"/><circle cx="656.0" cy="455.1" r="4"/><circle cx="668.8" cy="451.6" r="4"/><circle cx="681.9" cy="448.1" r="4"/><circle cx="694.7" cy="445.2" r="4"/><circle cx="707.5" cy="442.6" r="4"/><circle cx="720.0" cy="440.3" r="4"/><circle cx="732.9" cy="438.1" r="4"/><circle cx="746.1" cy="436.1" r="4"/><circle cx="757.9" cy="435.0" r="4"/></g>
<path d="M427.2 55L437 66L426.5 75.3" fill="none" stroke="#e53a31" stroke-width="8.500" stroke-linecap="round" stroke-linejoin="round"/>
<path d="M427.4 190.4L441 196.3L435.9 208.5" fill="none" stroke="#e53a31" stroke-width="8.500" stroke-linecap="round" stroke-linejoin="round"/>
<path d="M757.2 126.5L771.2 132.4L765.8 144.1" fill="none" stroke="#e53a31" stroke-width="8.500" stroke-linecap="round" stroke-linejoin="round"/>
<path d="M753.1 427.6L766.7 433.8L761.3 445.2" fill="none" stroke="#e53a31" stroke-width="8.500" stroke-linecap="round" stroke-linejoin="round"/>
</svg>
</body></html>
